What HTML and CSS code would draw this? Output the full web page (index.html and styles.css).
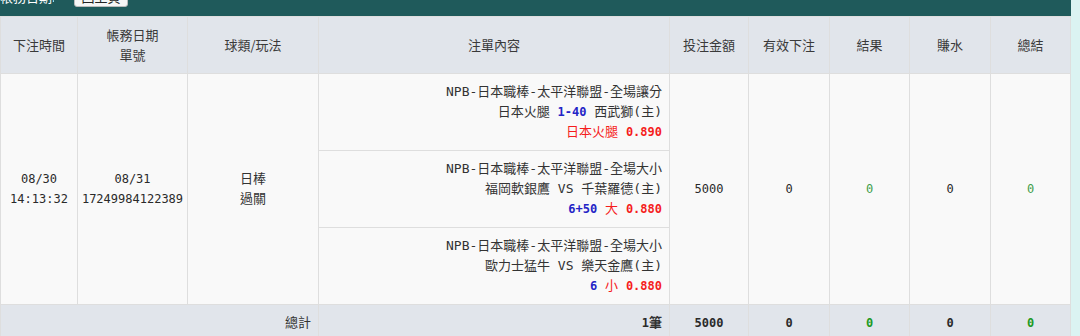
FILE: index.html
```html
<!DOCTYPE html>
<html lang="zh-Hant">
<head>
<meta charset="utf-8">
<title>注單明細</title>
<link rel="stylesheet" href="styles.css">
</head>
<body>
<div class="page">
  <div class="toolbar">
    <div class="toolbar-inner">
      <span class="toolbar-label">帳務日期:</span>
      <button class="btn">回上頁</button>
    </div>
  </div>
  <table class="grid">
    <colgroup>
      <col class="c1"><col class="c2"><col class="c3"><col class="c4"><col class="c5"><col class="c6"><col class="c7"><col class="c8"><col class="c9">
    </colgroup>
    <thead>
      <tr>
        <th>下注時間</th>
        <th>帳務日期<br>單號</th>
        <th>球類/玩法</th>
        <th>注單內容</th>
        <th>投注金額</th>
        <th>有效下注</th>
        <th>結果</th>
        <th>賺水</th>
        <th>總結</th>
      </tr>
    </thead>
    <tbody>
      <tr>
        <td rowspan="3" class="num">08/30<br>14:13:32</td>
        <td rowspan="3" class="num">08/31<br>17249984122389</td>
        <td rowspan="3">日棒<br>過關</td>
        <td class="bet">NPB-日本職棒-太平洋聯盟-全場讓分<br>日本火腿 <b class="blue num">1-40</b> 西武獅(主)<br><span class="red">日本火腿</span> <b class="red num">0.890</b></td>
        <td rowspan="3" class="num">5000</td>
        <td rowspan="3" class="num">0</td>
        <td rowspan="3" class="num green">0</td>
        <td rowspan="3" class="num">0</td>
        <td rowspan="3" class="num green">0</td>
      </tr>
      <tr>
        <td class="bet">NPB-日本職棒-太平洋聯盟-全場大小<br>福岡軟銀鷹 VS 千葉羅德(主)<br><b class="blue num">6+50</b> <span class="red">大</span> <b class="red num">0.880</b></td>
      </tr>
      <tr>
        <td class="bet">NPB-日本職棒-太平洋聯盟-全場大小<br>歐力士猛牛 VS 樂天金鷹(主)<br><b class="blue num">6</b> <span class="red">小</span> <b class="red num">0.880</b></td>
      </tr>
    </tbody>
    <tfoot>
      <tr>
        <td colspan="3" class="right">總計</td>
        <td class="right"><b><span class="num">1</span>筆</b></td>
        <td class="num"><b>5000</b></td>
        <td class="num"><b>0</b></td>
        <td class="num"><b class="dgreen">0</b></td>
        <td class="num"><b>0</b></td>
        <td class="num"><b class="dgreen">0</b></td>
      </tr>
    </tfoot>
  </table>
</div>
</body>
</html>
```
FILE: styles.css
```css
html, body {
  margin: 0;
  padding: 0;
}
body {
  background: #dbf3f2;
  font-family: "DejaVu Sans Mono", "Noto Sans CJK TC", monospace;
  font-size: 13px;
  color: #333;
}
.page {
  width: 1071px;
  background: #f9f9f9;
}
.toolbar {
  height: 16px;
  background: #1f5a5b;
  overflow: hidden;
}
.toolbar-inner {
  display: flex;
  align-items: center;
  gap: 20px;
  margin-top: -15px;
  height: 22px;
}
.toolbar-label {
  color: #fff;
  font-family: "Noto Sans CJK TC", sans-serif;
  font-size: 13px;
  width: 54px;
  white-space: nowrap;
  overflow: hidden;
}
.btn {
  height: 22px;
  width: 54px;
  padding: 0;
  border: 1px solid #bbb;
  border-radius: 3px;
  background: #f6f6f6;
  color: #222;
  font-family: "Noto Sans CJK TC", sans-serif;
  font-size: 13px;
}
.grid {
  width: 1071px;
  border-collapse: collapse;
  table-layout: fixed;
}
.c1 { width: 77px; }
.c2 { width: 110px; }
.c3 { width: 131px; }
.c4 { width: 351px; }
.c5 { width: 79px; }
.c6 { width: 81px; }
.c7 { width: 80px; }
.c8 { width: 81px; }
.c9 { width: 80px; }
.grid th,
.grid td {
  border: 1px solid #dedede;
  padding: 8px 2px;
  line-height: 20px;
  text-align: center;
  vertical-align: middle;
  white-space: nowrap;
}
.grid th {
  background: #e1e5eb;
  font-weight: normal;
  color: #3a3a3a;
  font-family: "Noto Sans CJK TC", sans-serif;
}
.grid tbody td {
  background: #f9f9f9;
}
.grid tfoot td {
  background: #e1e5eb;
}
.grid td.bet,
.grid td.right {
  text-align: right;
  padding-right: 7px;
}
.num {
  font-family: "DejaVu Sans Mono", monospace;
  font-size: 12px;
  color: #2a2a2a;
}
.blue {
  color: #2424c6;
}
.red {
  color: #f51d1d;
}
.green {
  color: #3f9e4b;
}
.dgreen {
  color: #1d9a22;
}
b {
  font-weight: bold;
}
```
